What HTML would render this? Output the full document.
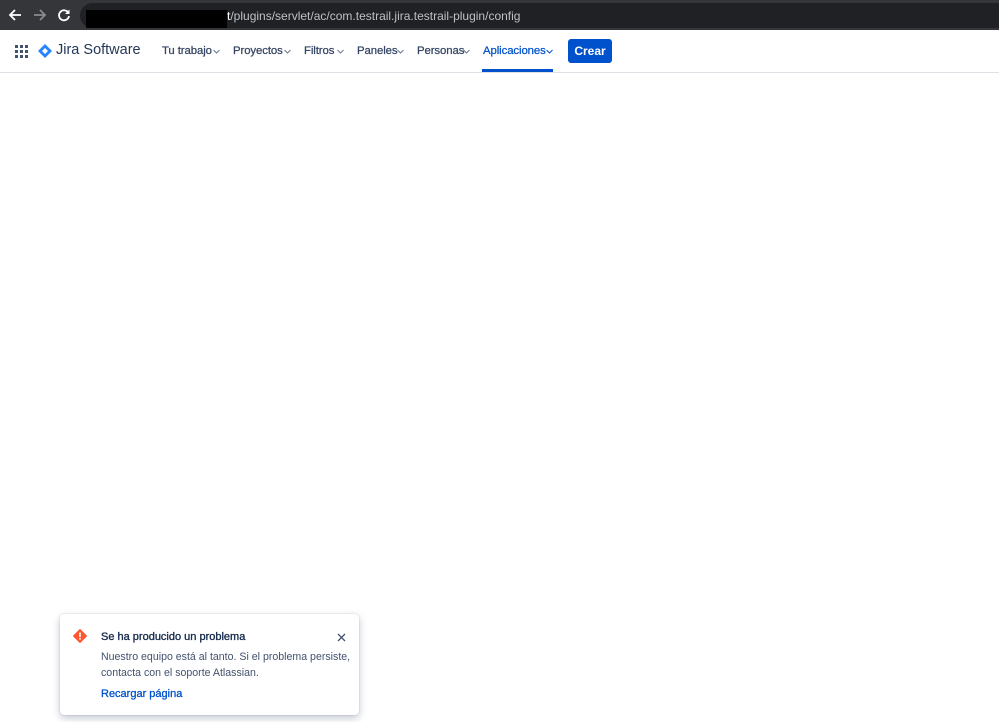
<!DOCTYPE html>
<html><head><meta charset="utf-8"><style>
*{margin:0;padding:0;box-sizing:border-box}
body{width:999px;height:722px;overflow:hidden;background:#fff;font-family:"Liberation Sans",sans-serif;position:relative}
.chrome{position:absolute;left:0;top:0;width:999px;height:30px;background:#35363a}
.url{position:absolute;left:80px;top:3px;width:930px;height:25px;background:#202124;border-radius:13px}
.black{position:absolute;left:86px;top:10px;width:141px;height:18px;background:#000}
.urltxt{position:absolute;left:227px;top:9px;font-size:12px;color:#bdc1c6}
.urltxt b{color:#fff;font-weight:normal}
.nav{position:absolute;left:0;top:30px;width:999px;height:43px;border-bottom:1px solid #dfe1e6;background:#fff}
.item{position:absolute;top:15px;font-size:11.4px;color:#344563;letter-spacing:-.1px;-webkit-text-stroke:.25px #344563}
.ch{position:absolute;top:19px}
.crear{position:absolute;left:568px;top:9px;width:44px;height:24px;background:#0052cc;color:#fff;border-radius:3px;font-size:12px;font-weight:bold;text-align:center;line-height:24px}
.toast{position:absolute;left:60px;top:614px;width:299px;height:101px;background:#fff;border-radius:4px;box-shadow:0 3px 8px rgba(9,30,66,.25),0 0 1px rgba(9,30,66,.3)}
.toast .t{position:absolute;left:41px;top:17px;font-size:11px;color:#172b4d;-webkit-text-stroke:.35px #172b4d}
.toast .d{position:absolute;left:41px;top:36px;font-size:10.6px;line-height:15.5px;color:#42526e;width:260px}
.toast .l{position:absolute;left:41px;top:74px;font-size:11px;color:#0052cc;-webkit-text-stroke:.3px #0052cc}
</style></head><body>
<div class="chrome">
<svg style="position:absolute;left:8px;top:8px" width="14" height="14" viewBox="0 0 14 14"><path d="M13 7H2M7 2L2 7l5 5" stroke="#fff" stroke-width="1.8" fill="none"/></svg>
<svg style="position:absolute;left:33px;top:8px" width="14" height="14" viewBox="0 0 14 14"><path d="M1 7h11M7 2l5 5-5 5" stroke="#8a8b8e" stroke-width="1.8" fill="none"/></svg>
<svg style="position:absolute;left:57px;top:8px" width="14" height="14" viewBox="0 0 14 14"><path d="M11.5 5A5 5 0 1 0 12 8" stroke="#fff" stroke-width="1.8" fill="none"/><path d="M12.5 1.5v4.5H8z" fill="#fff"/></svg>
<div class="url"></div>
<div class="black"></div>
<div class="urltxt"><b>t</b>/plugins/servlet/ac/com.testrail.jira.testrail-plugin/config</div>
</div>
<div class="nav">
<svg style="position:absolute;left:15px;top:15px" width="13" height="13" viewBox="0 0 13 13" fill="#42526e"><rect x="0" y="0" width="3" height="3"/><rect x="5" y="0" width="3" height="3"/><rect x="10" y="0" width="3" height="3"/><rect x="0" y="5" width="3" height="3"/><rect x="5" y="5" width="3" height="3"/><rect x="10" y="5" width="3" height="3"/><rect x="0" y="10" width="3" height="3"/><rect x="5" y="10" width="3" height="3"/><rect x="10" y="10" width="3" height="3"/></svg>
<svg style="position:absolute;left:38px;top:14px" width="14" height="14" viewBox="0 0 14 14"><path d="M7 0L14 7 7 14 0 7z" fill="#2684ff"/><path d="M7 4L10 7 7 10 4 7z" fill="#fff"/></svg>
<div style="position:absolute;left:56px;top:12px;font-size:14.5px;color:#253858">Jira Software</div>
<div class="item" style="left:162px">Tu trabajo</div>
<div class="item" style="left:233px">Proyectos</div>
<div class="item" style="left:304px">Filtros</div>
<div class="item" style="left:357px">Paneles</div>
<div class="item" style="left:417px">Personas</div>
<div class="item" style="left:483px;color:#0052cc;-webkit-text-stroke:.25px #0052cc">Aplicaciones</div>
<svg class="ch" style="left:213px" width="7" height="5" viewBox="0 0 7 5"><path d="M.5 1l3 3 3-3" stroke="#6b778c" fill="none"/></svg>
<svg class="ch" style="left:284px" width="7" height="5" viewBox="0 0 7 5"><path d="M.5 1l3 3 3-3" stroke="#6b778c" fill="none"/></svg>
<svg class="ch" style="left:337px" width="7" height="5" viewBox="0 0 7 5"><path d="M.5 1l3 3 3-3" stroke="#6b778c" fill="none"/></svg>
<svg class="ch" style="left:397px" width="7" height="5" viewBox="0 0 7 5"><path d="M.5 1l3 3 3-3" stroke="#6b778c" fill="none"/></svg>
<svg class="ch" style="left:463px" width="7" height="5" viewBox="0 0 7 5"><path d="M.5 1l3 3 3-3" stroke="#6b778c" fill="none"/></svg>
<svg class="ch" style="left:546px" width="7" height="5" viewBox="0 0 7 5"><path d="M.5 1l3 3 3-3" stroke="#0052cc" fill="none"/></svg>
<div style="position:absolute;left:482px;top:39px;width:71px;height:3px;background:#0052cc"></div>
<div class="crear">Crear</div>
</div>
<div class="toast">
<svg style="position:absolute;left:13px;top:15px" width="14" height="14" viewBox="0 0 14 14"><path d="M7 0.5L13.5 7 7 13.5 0.5 7z" fill="#ff5630" stroke="#ff5630" stroke-linejoin="round" stroke-width="1"/><rect x="6.2" y="3.5" width="1.6" height="4.5" fill="#fff"/><rect x="6.2" y="9" width="1.6" height="1.6" fill="#fff"/></svg>
<div class="t">Se ha producido un problema</div>
<svg style="position:absolute;left:277px;top:19px" width="9" height="9" viewBox="0 0 9 9"><path d="M1 1l7 7M8 1L1 8" stroke="#42526e" stroke-width="1.3"/></svg>
<div class="d">Nuestro equipo está al tanto. Si el problema persiste, contacta con el soporte Atlassian.</div>
<div class="l">Recargar página</div>
</div>
</body></html>
